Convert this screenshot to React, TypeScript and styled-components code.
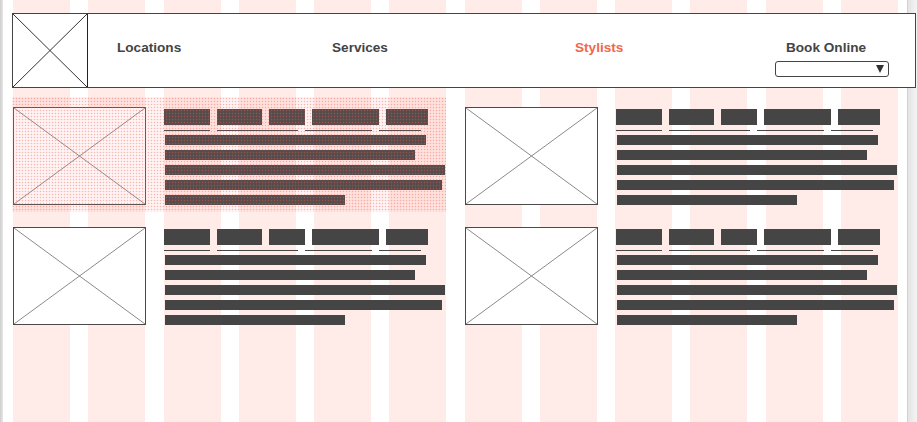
import { createGlobalStyle, styled } from 'styled-components';

const GlobalStyle = createGlobalStyle`
  html, body {
    margin: 0;
    padding: 0;
    background: #fff;
  }
  body {
    font-family: "Liberation Sans", Arial, sans-serif;
    color: #444;
  }
`;

const Page = styled.div`
  position: relative;
  width: 917px;
  height: 422px;
  overflow: hidden;
  background: #fff;
`;

const EdgeLeft = styled.div`
  position: absolute;
  left: 0;
  top: 0;
  bottom: 0;
  width: 3px;
  background: linear-gradient(to right, #cdcdcd, #e8e8e8);
`;

const EdgeRight = styled.div`
  position: absolute;
  right: 0;
  top: 0;
  bottom: 0;
  width: 10px;
  box-sizing: border-box;
  border-left: 1px solid #d2d2d2;
  background: linear-gradient(to right, #e4e4e4, #f4f4f4);
`;

/* layout grid guides drawn behind the content */
const Columns = styled.div`
  position: absolute;
  top: 0;
  bottom: 0;
  left: 13px;
  width: 885px;
  display: grid;
  grid-template-columns: repeat(12, 1fr);
  column-gap: 18.27px;
`;

const Column = styled.div`
  background: #ffebe8;
`;

const Content = styled.div`
  position: relative;
  padding-top: 13px;
`;

const Header = styled.header`
  position: relative;
  z-index: 1;
  margin-left: 12px;
  width: 904px;
  height: 75px;
  box-sizing: border-box;
  border: 1px solid #444;
  background: #fff;
  display: flex;
`;

const Logo = styled.div`
  width: 75px;
  height: 100%;
  box-sizing: border-box;
  border-right: 1px solid #222;
  flex-shrink: 0;

  svg {
    display: block;
    width: 100%;
    height: 100%;
  }
`;

const Nav = styled.nav`
  flex: 1;
  display: grid;
  grid-template-columns: 215px 243px 200px 114px;
  align-items: start;
  padding: 26px 0 0 29px;
`;

const NavLink = styled.a<{ $active?: boolean }>`
  font-size: 13.6px;
  line-height: 16px;
  font-weight: bold;
  color: ${p => (p.$active ? '#f2674b' : '#444')};
  text-decoration: none;
  white-space: nowrap;
`;

const BookColumn = styled.div`
  display: flex;
  flex-direction: column;
  align-items: flex-start;

  & > a {
    padding-left: 11px;
  }
`;

const Select = styled.div`
  margin-top: 5px;
  width: 114px;
  height: 16px;
  box-sizing: border-box;
  border: 1px solid #444;
  border-radius: 3px;
  background: #fff;
  display: flex;
  align-items: center;
  justify-content: flex-end;
  padding-right: 4px;
`;

const Arrow = styled.span`
  width: 0;
  height: 0;
  border-left: 4px solid transparent;
  border-right: 4px solid transparent;
  border-top: 8px solid #333;
`;

const Cards = styled.main`
  margin: 19px 0 0 13px;
  width: 885px;
  display: grid;
  grid-template-columns: repeat(2, 1fr);
  column-gap: 18.27px;
  row-gap: 22px;
`;

const Card = styled.article`
  position: relative;
  height: 98px;
  display: grid;
  grid-template-columns: 133px 1fr;
  column-gap: 18px;
`;

const Highlight = styled.div`
  position: absolute;
  top: -10px;
  bottom: -7px;
  left: -1px;
  right: 0;
  pointer-events: none;
  background-color: rgba(255, 150, 140, 0.1);
  background-image: radial-gradient(circle, rgba(240, 90, 80, 0.42) 0.75px, transparent 1.05px);
  background-size: 3px 3px;
`;

const Picture = styled.div`
  height: 98px;
  box-sizing: border-box;
  border: 1px solid #4a4a4a;
  background: #fff;

  svg {
    display: block;
    width: 100%;
    height: 100%;
  }
`;

const TextBlock = styled.div`
  padding-top: 2px;
  display: flex;
  flex-direction: column;
`;

const Row = styled.div<{ $gap: number }>`
  display: flex;
  gap: ${p => p.$gap}px;
`;

const Bar = styled.div<{ $w: number; $h: number }>`
  width: ${p => p.$w}px;
  height: ${p => p.$h}px;
  background: #454545;
  flex-shrink: 0;
`;

const Underlines = styled(Row)`
  margin-top: 5px;
`;

const Body = styled.div`
  margin: 4px 0 0 1px;
  display: flex;
  flex-direction: column;
  gap: 5px;
`;

const headingWidths = [46, 45, 36, 67, 42];
const underlineWidths = [46, 81, 67, 42];
const bodyWidths = [261, 250, 280, 277, 180];

function Cross({ color }: { color: string }) {
  return (
    <svg viewBox="0 0 100 100" preserveAspectRatio="none">
      <line x1="0" y1="0" x2="100" y2="100" stroke={color} strokeWidth="1" vectorEffect="non-scaling-stroke" />
      <line x1="100" y1="0" x2="0" y2="100" stroke={color} strokeWidth="1" vectorEffect="non-scaling-stroke" />
    </svg>
  );
}

function ContentCard({ highlighted }: { highlighted?: boolean }) {
  return (
    <Card>
      <Picture>
        <Cross color="#8a8a8a" />
      </Picture>
      <TextBlock>
        <Row $gap={7}>
          {headingWidths.map((w, i) => (
            <Bar key={i} $w={w} $h={16} />
          ))}
        </Row>
        <Underlines $gap={7}>
          {underlineWidths.map((w, i) => (
            <Bar key={i} $w={w} $h={1} />
          ))}
        </Underlines>
        <Body>
          {bodyWidths.map((w, i) => (
            <Bar key={i} $w={w} $h={10} />
          ))}
        </Body>
      </TextBlock>
      {highlighted && <Highlight />}
    </Card>
  );
}

export default function App() {
  return (
    <Page>
      <GlobalStyle />
      <EdgeLeft />
      <EdgeRight />
      <Columns>
        {Array.from({ length: 12 }, (_, i) => (
          <Column key={i} />
        ))}
      </Columns>
      <Content>
        <Header>
          <Logo>
            <Cross color="#333" />
          </Logo>
          <Nav>
            <NavLink href="#">Locations</NavLink>
            <NavLink href="#">Services</NavLink>
            <NavLink href="#" $active>
              Stylists
            </NavLink>
            <BookColumn>
              <NavLink href="#">Book Online</NavLink>
              <Select>
                <Arrow />
              </Select>
            </BookColumn>
          </Nav>
        </Header>
        <Cards>
          <ContentCard highlighted />
          <ContentCard />
          <ContentCard />
          <ContentCard />
        </Cards>
      </Content>
    </Page>
  );
}
